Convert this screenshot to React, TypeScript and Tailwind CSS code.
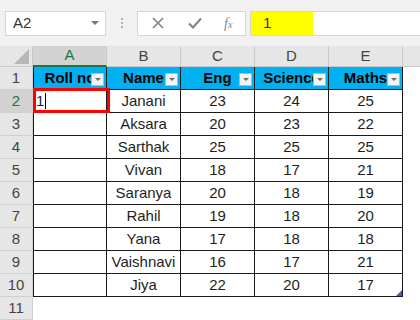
import React from 'react';

type Row = { name: string; eng: number; sci: number; maths: number };

const ROWS: Row[] = [
  { name: 'Janani', eng: 23, sci: 24, maths: 25 },
  { name: 'Aksara', eng: 20, sci: 23, maths: 22 },
  { name: 'Sarthak', eng: 25, sci: 25, maths: 25 },
  { name: 'Vivan', eng: 18, sci: 17, maths: 21 },
  { name: 'Saranya', eng: 20, sci: 18, maths: 19 },
  { name: 'Rahil', eng: 19, sci: 18, maths: 20 },
  { name: 'Yana', eng: 17, sci: 18, maths: 18 },
  { name: 'Vaishnavi', eng: 16, sci: 17, maths: 21 },
  { name: 'Jiya', eng: 22, sci: 20, maths: 17 },
];

const COLS = ['A', 'B', 'C', 'D', 'E'];
const HEADERS = ['Roll no', 'Name', 'Eng', 'Science', 'Maths'];

function FilterButton() {
  return (
    <span className="absolute right-[2px] bottom-[3px] flex h-[13px] w-[13px] items-center justify-center border border-[#b8b8b8] bg-[#f4f4f4]">
      <span className="h-0 w-0 border-x-[3px] border-t-[3px] border-x-transparent border-t-[#6d6d6d]" />
    </span>
  );
}

function RowHeader({ n, selected }: { n: number; selected?: boolean }) {
  return (
    <div
      className={`flex h-full w-[33px] shrink-0 items-center justify-center border-b border-r border-[#d0d0d0] text-[15px] ${
        selected ? 'bg-[#d2d2d2] text-[#217346]' : 'bg-[#e6e6e6] text-[#444]'
      }`}
    >
      {n}
    </div>
  );
}

export default function App() {
  return (
    <div
      className="relative h-[320px] w-[420px] overflow-hidden bg-white text-[#1e1e1e]"
      style={{ fontFamily: '"Liberation Sans", Arial, sans-serif' }}
    >
      {/* formula bar */}
      <div className="flex h-[46px] items-center bg-[#f1f1f1] pl-[5px]">
        <div className="flex h-[25px] w-[101px] items-center justify-between border border-[#d6d6d6] bg-white pl-[7px] pr-[6px] text-[15px] text-[#333]">
          <span>A2</span>
          <span className="h-0 w-0 border-x-[4px] border-t-[4px] border-x-transparent border-t-[#777]" />
        </div>
        <div className="flex w-[31px] flex-col items-center gap-[2px]">
          <span className="h-[2px] w-[2px] bg-[#b0b0b0]" />
          <span className="h-[2px] w-[2px] bg-[#b0b0b0]" />
          <span className="h-[2px] w-[2px] bg-[#b0b0b0]" />
        </div>
        <div className="flex h-[25px] w-[109px] items-center border border-[#d6d6d6] bg-white text-[#777]">
          <svg width="14" height="14" viewBox="0 0 14 14" className="ml-[13px]">
            <path d="M2 2 L12 12 M12 2 L2 12" stroke="#808080" strokeWidth="1.6" fill="none" />
          </svg>
          <svg width="16" height="14" viewBox="0 0 16 14" className="ml-[22px]">
            <path d="M2 7.5 L6 11.5 L14 2.5" stroke="#808080" strokeWidth="2" fill="none" />
          </svg>
          <span
            className="ml-[21px] text-[14px] italic text-[#888]"
            style={{ fontFamily: '"Liberation Serif", serif' }}
          >
            f<span className="text-[10px]">x</span>
          </span>
        </div>
        <div className="ml-[4px] flex h-[25px] flex-1 border-y border-l border-[#d6d6d6] bg-white">
          <div className="flex h-full w-[62px] items-center bg-[#ffff00] pl-[12px] text-[15px] text-[#333]">
            1
          </div>
        </div>
      </div>

      {/* column headers */}
      <div className="flex h-[21px] bg-[#e6e6e6]">
        <div className="relative w-[33px] shrink-0 border-r border-b border-[#c8c8c8]">
          <svg width="15" height="15" viewBox="0 0 15 15" className="absolute right-[3px] bottom-[2px]">
            <path d="M15 0 L15 15 L0 15 Z" fill="#b7b7b7" />
          </svg>
        </div>
        {COLS.map((c, i) => (
          <div
            key={c}
            className={`flex w-[74px] shrink-0 items-center justify-center border-r text-[15px] ${
              i === 0
                ? 'border-b-2 border-r-[#c8c8c8] border-b-[#217346] bg-[#d3d3d3] text-[#217346]'
                : 'border-b border-[#c8c8c8] text-[#444]'
            }`}
          >
            {c}
          </div>
        ))}
        <div className="flex-1 border-b border-[#c8c8c8]" />
      </div>

      {/* header row */}
      <div className="flex h-[23px]">
        <RowHeader n={1} />
        {HEADERS.map((h, i) => (
          <div
            key={h}
            className={`relative flex w-[74px] shrink-0 items-center justify-center overflow-hidden whitespace-nowrap border-b border-r border-[#1a1a1a] bg-[#00b0f0] text-[15px] font-bold text-black ${
              i === 0 ? 'border-l' : ''
            }`}
          >
            {h}
            <FilterButton />
          </div>
        ))}
      </div>

      {/* data rows */}
      {ROWS.map((r, i) => (
        <div key={r.name} className="flex h-[23px]">
          <RowHeader n={i + 2} selected={i === 0} />
          <div className="relative flex w-[74px] shrink-0 items-center border-b border-l border-r border-[#1a1a1a] pl-[2px] text-[15px]">
            {i === 0 && (
              <>
                <span>1</span>
                <span className="ml-[1px] h-[16px] w-[1px] bg-black" />
                <span className="absolute -top-[2px] -left-[1px] h-[25px] w-[77px] border-[3px] border-[#ff0000]" />
              </>
            )}
          </div>
          <div className="flex w-[74px] shrink-0 items-center justify-center border-b border-r border-[#1a1a1a] text-[15px]">
            {r.name}
          </div>
          <div className="flex w-[74px] shrink-0 items-center justify-center border-b border-r border-[#1a1a1a] text-[15px]">
            {r.eng}
          </div>
          <div className="flex w-[74px] shrink-0 items-center justify-center border-b border-r border-[#1a1a1a] text-[15px]">
            {r.sci}
          </div>
          <div className="relative flex w-[74px] shrink-0 items-center justify-center border-b border-r border-[#1a1a1a] text-[15px]">
            {r.maths}
            {i === ROWS.length - 1 && (
              <svg width="6" height="6" viewBox="0 0 6 6" className="absolute right-0 bottom-0">
                <path d="M6 0 L6 6 L0 6 Z" fill="#3a5fcd" />
              </svg>
            )}
          </div>
        </div>
      ))}

      {/* empty row 11 */}
      <div className="flex h-[23px]">
        <RowHeader n={11} />
      </div>
    </div>
  );
}
